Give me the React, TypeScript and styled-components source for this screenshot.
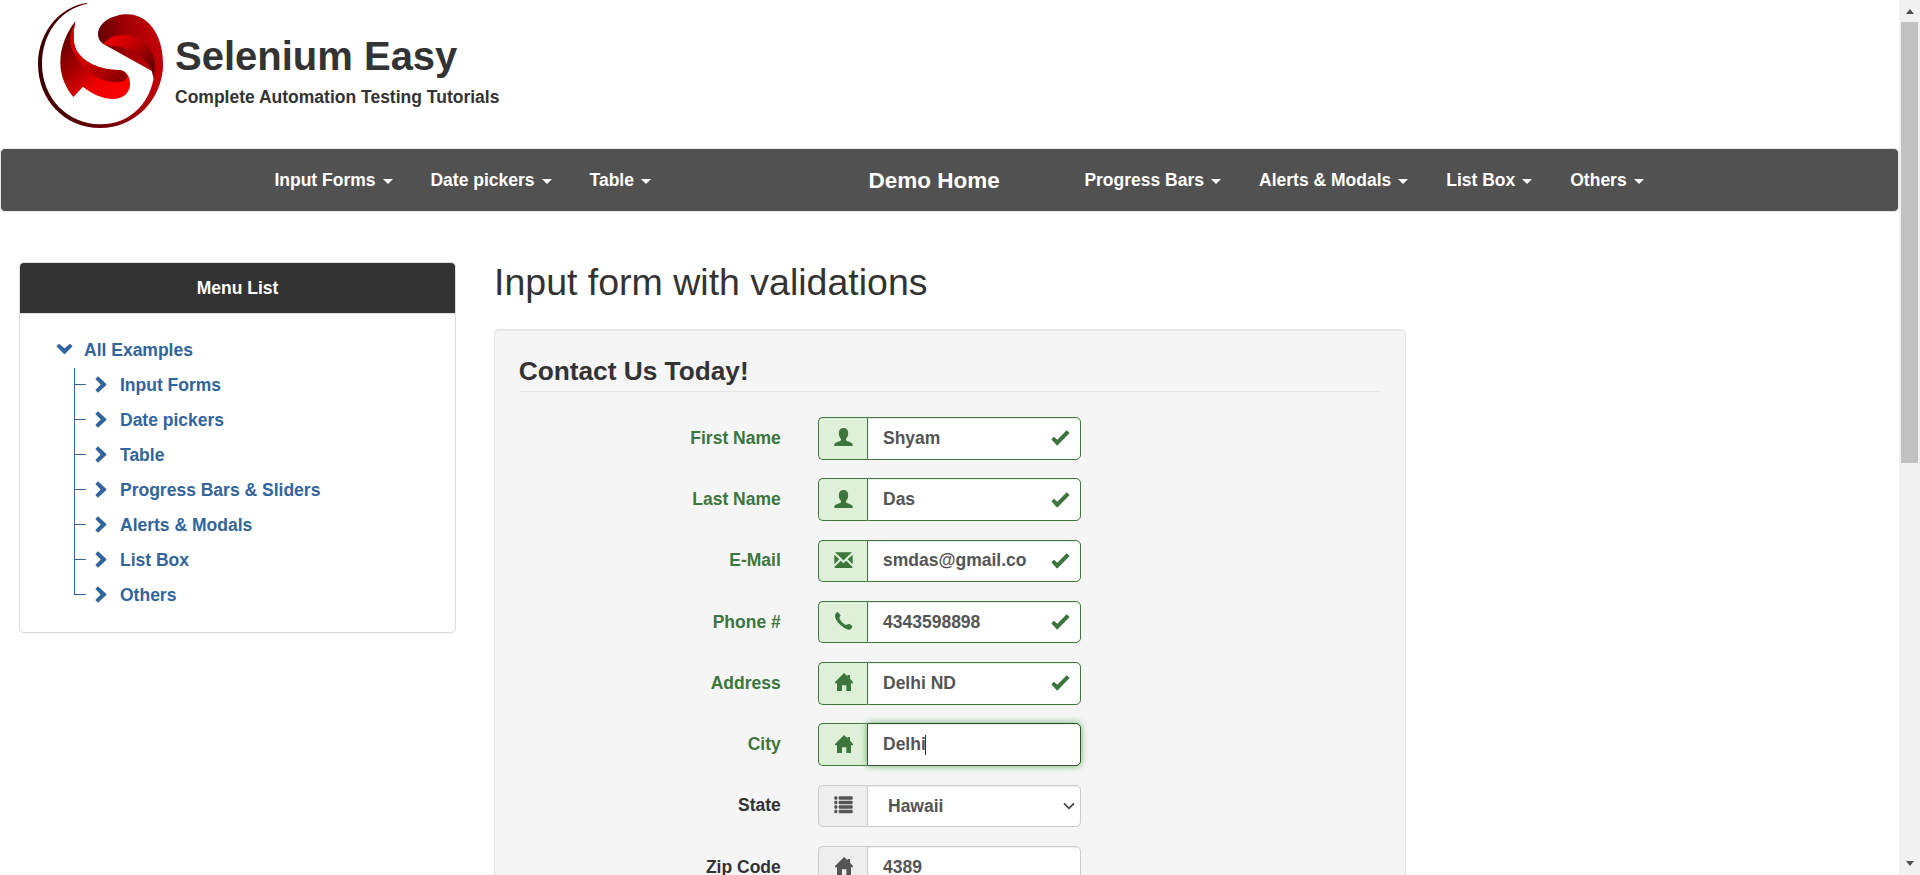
import React from "react";
import styled, { createGlobalStyle, css } from "styled-components";

const GlobalStyle = createGlobalStyle`
  *, *::before, *::after { box-sizing: border-box; }
  html, body { margin: 0; padding: 0; height: 100%; overflow: hidden; }
  body {
    background: #fff;
    color: #333;
    font-family: "Liberation Sans", Arial, sans-serif;
    font-size: 17.5px;
    font-weight: 700;
    line-height: 25px;
  }
  a { color: inherit; text-decoration: none; }
  ul { list-style: none; margin: 0; padding: 0; }
`;

const Window = styled.div`
  display: flex;
  width: 1920px;
  height: 875px;
  overflow: hidden;
`;

const Page = styled.div`
  flex: 1;
  min-width: 0;
  overflow: hidden;
`;

/* ---------- header ---------- */

const Header = styled.header`
  display: flex;
  height: 148px;
  padding: 3px 0 0 38px;
`;

const Brand = styled.div`
  display: flex;
  flex-direction: column;
  padding: 31px 0 0 12px;
`;

const SiteName = styled.h1`
  margin: 0;
  font-size: 40px;
  line-height: 45px;
`;

const Tagline = styled.div`
  margin-top: 6px;
`;

const Logo = () => (
  <svg width="125" height="125" viewBox="12 9 375 375" aria-label="Selenium Easy">
    <defs>
      <linearGradient id="ring" x1="0" y1="0.3" x2="1" y2="0.3">
        <stop offset="0" stopColor="#3c0002" />
        <stop offset="0.5" stopColor="#6a0006" />
        <stop offset="0.85" stopColor="#a90006" />
        <stop offset="1" stopColor="#c80008" />
      </linearGradient>
      <linearGradient id="cap" x1="0" y1="0.4" x2="1" y2="0.3">
        <stop offset="0" stopColor="#610003" />
        <stop offset="0.45" stopColor="#a00004" />
        <stop offset="1" stopColor="#c90008" />
      </linearGradient>
      <linearGradient id="fold" x1="0" y1="0" x2="1" y2="0.8">
        <stop offset="0" stopColor="#f40000" />
        <stop offset="0.4" stopColor="#c90000" />
        <stop offset="1" stopColor="#5d0000" />
      </linearGradient>
      <linearGradient id="tail" x1="0" y1="0" x2="0.9" y2="1">
        <stop offset="0.1" stopColor="#5c0000" />
        <stop offset="0.45" stopColor="#a80000" />
        <stop offset="0.7" stopColor="#ee0000" />
        <stop offset="1" stopColor="#ff0000" />
      </linearGradient>
      <linearGradient id="band" x1="0" y1="0" x2="1" y2="0.9">
        <stop offset="0" stopColor="#e00000" />
        <stop offset="0.5" stopColor="#cc0000" />
        <stop offset="1" stopColor="#860000" />
      </linearGradient>
    </defs>
    <path
      fill="url(#ring)"
      d="M160 9C80 17 12 96 12 192C12 300 92 384 198 384C304 384 387 298 387 188L360 225C352 300 296 373 198 373C100 373 24 292 24 192C24 102 78 27 160 11Z"
    />
    <path
      fill="url(#cap)"
      d="M208 132C196 124 192 112 192 101C194 66 238 43 280 43C344 43 387 108 387 188C387 224 378 262 355 291C363 244 360 218 359 216Z"
    />
    <path
      fill="url(#fold)"
      d="M208 132C222 112 250 102 280 106C330 113 366 156 363 196C362 210 361 220 358 236C356 186 300 142 236 138Q218 137 208 132Z"
    />
    <path
      fill="url(#tail)"
      d="M124 64C98 98 79 140 79 188C79 226 94 262 118 291L147 260C174 282 208 297 238 297C268 297 288 278 288 252C288 228 276 210 250 210C196 208 148 186 128 152C116 130 117 100 124 64Z"
    />
    <path
      fill="url(#band)"
      d="M124 64C108 96 106 122 112 142C128 188 174 240 240 247C262 248 276 242 279 232C280 218 270 210 250 210C196 208 148 186 128 152C116 130 117 100 124 64Z"
    />
  </svg>
);

/* ---------- navigation bar ---------- */

const NavBar = styled.nav`
  display: flex;
  height: 64px;
  padding: 0 18.75px 0 254.5px;
  border: 1px solid #e7e7e7;
  border-radius: 5px;
  background: #515151;
  color: #fff;
`;

const NavGroup = styled.div<{ $width?: number }>`
  display: flex;
  align-items: center;
  width: ${(p) => (p.$width ? `${p.$width}px` : "auto")};
`;

const NavLink = styled.a`
  display: flex;
  align-items: center;
  padding: 0 18.9px;
`;

const Caret = styled.span`
  margin: 3px 0 0 7.2px;
  border-top: 5px solid currentColor;
  border-left: 5px solid transparent;
  border-right: 5px solid transparent;
`;

const HomeLink = styled.a`
  width: 197px;
  font-size: 22.5px;
  line-height: 25px;
`;

/* ---------- body ---------- */

const Content = styled.main`
  display: flex;
  align-items: flex-start;
  padding: 50px 0 0 19px;
`;

const SidePanel = styled.aside`
  width: 437px;
  height: 371px;
  border: 1px solid #ddd;
  border-radius: 5px;
  box-shadow: 0 1px 1px rgba(0, 0, 0, 0.05);
  overflow: hidden;
`;

const PanelHeading = styled.div`
  height: 51px;
  padding-top: 13px;
  border-bottom: 1px solid #ddd;
  background: #333;
  color: #fff;
  text-align: center;
`;

const Tree = styled.div`
  padding: 24px 0 0 36px;
  color: #31659c;
`;

const TreeRoot = styled.a`
  display: flex;
  height: 25px;
  align-items: center;
  gap: 11px;

  svg { margin-top: -4px; }
`;

const TreeBranch = styled.ul`
  position: relative;
  margin-left: 18px;
  padding-top: 5px;

  &::before {
    content: "";
    position: absolute;
    top: 5px;
    left: 0;
    width: 1px;
    height: 227px;
    background: #31659c;
  }
`;

const TreeLeaf = styled.li`
  display: flex;
  height: 35px;
  align-items: center;

  &::before {
    content: "";
    width: 12px;
    height: 1px;
    margin: -3px 9px 0 0;
    background: #31659c;
  }

  svg { margin: -3px 13px 0 0; }
`;

const FormColumn = styled.section`
  width: 912px;
  margin-left: 38px;
`;

const PageTitle = styled.h2`
  margin: 0;
  height: 67px;
  font-size: 37.5px;
  font-weight: 400;
  line-height: 41px;
`;

const Well = styled.form`
  padding: 23.5px 23.75px;
  height: 700px;
  border: 1px solid #e3e3e3;
  border-radius: 5px;
  background: #f5f5f5;
  box-shadow: inset 0 1px 1px rgba(0, 0, 0, 0.05);
`;

const Legend = styled.h3`
  margin: 0 0 25.1px;
  height: 38.5px;
  border-bottom: 1px solid #e5e5e5;
  font-size: 26.25px;
  line-height: 35px;
`;

type Tone = "valid" | "plain";

const Field = styled.div<{ $tone: Tone }>`
  display: flex;
  height: 42.5px;
  margin-bottom: 18.75px;
  color: ${(p) => (p.$tone === "valid" ? "#3c763d" : "#333")};
`;

const Label = styled.label`
  width: 262px;
  margin-right: 37.25px;
  padding-top: 8.75px;
  text-align: right;
`;

const Addon = styled.span<{ $tone: Tone }>`
  display: flex;
  align-items: center;
  justify-content: center;
  width: 49px;
  padding-bottom: 2px;
  border: 1px solid;
  border-right: 0;
  border-radius: 5px 0 0 5px;
  ${(p) =>
    p.$tone === "valid"
      ? css`
          color: #3c763d;
          background: #dff0d8;
          border-color: #3c763d;
        `
      : css`
          color: #555;
          background: #eee;
          border-color: #ccc;
        `}
`;

const Control = styled.div<{ $tone: Tone; $focus?: boolean; $select?: boolean }>`
  display: flex;
  align-items: center;
  justify-content: space-between;
  width: 214px;
  padding: ${(p) => (p.$select ? "1px 5px 0 20px" : "0 10px 0 15px")};
  border: 1px solid ${(p) => (p.$tone === "valid" ? "#3c763d" : "#ccc")};
  border-radius: 0 5px 5px 0;
  background: #fff;
  color: #555;
  box-shadow: inset 0 1px 1px rgba(0, 0, 0, 0.075);
  ${(p) =>
    p.$focus &&
    css`
      border-color: #2b542c;
      box-shadow: inset 0 1px 1px rgba(0, 0, 0, 0.075), 0 0 7.5px #67b168;
    `}
`;

const Value = styled.span`
  display: flex;
  align-items: center;
`;

const TextCursor = styled.i`
  width: 1px;
  height: 20px;
  margin-left: -1px;
  background: #333;
`;

/* ---------- icons ---------- */

const Glyph = ({ children }: { children: React.ReactNode }) => (
  <svg width="19" height="18" viewBox="0 0 57 54" fill="currentColor">
    {children}
  </svg>
);

const UserIcon = () => (
  <Glyph>
    <path d="M28.500 0C19 0 14.500 6 14.500 16C14.500 24 17 29 21 33V37C18 41 1 43 1 50V54H56V50C56 43 39 41 36 37V33C40 29 42.500 24 42.500 16C42.500 6 38 0 28.500 0Z" />
  </Glyph>
);

const MailIcon = () => (
  <Glyph>
    <path d="M3 4H54L28.500 28ZM1 11L16 25L1 40ZM56 11L41 25L56 40ZM2 51V47L20 29L28.500 37L37 29L55 47V51Z" />
  </Glyph>
);

const PhoneIcon = () => (
  <Glyph>
    <path d="M11 0L20 10L16 18C18 26 28 36 36 39L45 35L54 41C56 44 53 50 48 53C43 54 33 51 24 43C12 33 3 21 3 12C3 6 7 1 11 0Z" />
  </Glyph>
);

const HomeIcon = () => (
  <Glyph>
    <path d="M30 0L41 10V6H48V17L57 27V31H51V54H37V37H24V54H9V31H3V27Z" />
  </Glyph>
);

const ListIcon = () => (
  <Glyph>
    {[1, 14.5, 28, 41.5].map((y) => (
      <g key={y}>
        <rect x="1" y={y} width="9" height="10.500" rx="3" />
        <rect x="14" y={y} width="42" height="10.500" rx="3" />
      </g>
    ))}
  </Glyph>
);

const OkIcon = () => (
  <svg width="19" height="16" viewBox="0 0 57 48" fill="currentColor">
    <path d="M1 28L9 20L19 29L47 1L56 9L20 46H17Z" />
  </svg>
);

const ChevronDown = () => (
  <svg width="17" height="12" viewBox="0 0 51 36" fill="currentColor">
    <path d="M9 2L25.500 16L42 2L50 10L27 33H24L1 10Z" />
  </svg>
);

const ChevronRight = () => (
  <svg width="12" height="17" viewBox="0 0 36 51" fill="currentColor">
    <path d="M1 9L9 1L34 24V27L9 50L1 42L17 25.500Z" />
  </svg>
);

const SelectArrow = () => (
  <svg width="12" height="8" viewBox="0 0 12 8" fill="none" stroke="#444" strokeWidth="1.800">
    <path d="M1 1.300L6 6.300L11 1.300" />
  </svg>
);

/* ---------- scrollbar ---------- */

const ScrollTrack = styled.div`
  display: flex;
  flex-direction: column;
  align-items: center;
  width: 21px;
  height: 875px;
  padding: 9px 0;
  background: #f1f1f1;
`;

const ScrollThumb = styled.div`
  width: 17px;
  height: 441px;
  margin: 8px 0 auto;
  background: #c1c1c1;
`;

const ScrollArrow = styled.span<{ $up?: boolean }>`
  border: 4.5px solid transparent;
  ${(p) =>
    p.$up
      ? css`
          border-top: 0;
          border-bottom: 5px solid #505050;
        `
      : css`
          border-bottom: 0;
          border-top: 5px solid #505050;
        `}
`;

/* ---------- data ---------- */

const leftLinks = ["Input Forms", "Date pickers", "Table"];
const rightLinks = ["Progress Bars", "Alerts & Modals", "List Box", "Others"];
const treeItems = [
  "Input Forms",
  "Date pickers",
  "Table",
  "Progress Bars & Sliders",
  "Alerts & Modals",
  "List Box",
  "Others",
];

interface FieldData {
  label: string;
  value: string;
  icon: React.ReactNode;
  tone: Tone;
  focus?: boolean;
  select?: boolean;
}

const fields: FieldData[] = [
  { label: "First Name", value: "Shyam", icon: <UserIcon />, tone: "valid" },
  { label: "Last Name", value: "Das", icon: <UserIcon />, tone: "valid" },
  { label: "E-Mail", value: "smdas@gmail.co", icon: <MailIcon />, tone: "valid" },
  { label: "Phone #", value: "4343598898", icon: <PhoneIcon />, tone: "valid" },
  { label: "Address", value: "Delhi ND", icon: <HomeIcon />, tone: "valid" },
  { label: "City", value: "Delhi", icon: <HomeIcon />, tone: "valid", focus: true },
  { label: "State", value: "Hawaii", icon: <ListIcon />, tone: "plain", select: true },
  { label: "Zip Code", value: "4389", icon: <HomeIcon />, tone: "plain" },
];

const Check = styled.span`
  display: flex;
  color: #3c763d;
`;

const MenuLink = ({ text }: { text: string }) => (
  <NavLink href="#">
    {text}
    <Caret />
  </NavLink>
);

export default function App() {
  return (
    <>
      <GlobalStyle />
      <Window>
        <Page>
          <Header>
            <Logo />
            <Brand>
              <SiteName>Selenium Easy</SiteName>
              <Tagline>Complete Automation Testing Tutorials</Tagline>
            </Brand>
          </Header>
          <NavBar>
            <NavGroup $width={613}>
              {leftLinks.map((t) => (
                <MenuLink key={t} text={t} />
              ))}
            </NavGroup>
            <NavGroup>
              <HomeLink href="#">Demo Home</HomeLink>
              {rightLinks.map((t) => (
                <MenuLink key={t} text={t} />
              ))}
            </NavGroup>
          </NavBar>
          <Content>
            <SidePanel>
              <PanelHeading>Menu List</PanelHeading>
              <Tree>
                <TreeRoot href="#">
                  <ChevronDown />
                  All Examples
                </TreeRoot>
                <TreeBranch>
                  {treeItems.map((t) => (
                    <TreeLeaf key={t}>
                      <ChevronRight />
                      {t}
                    </TreeLeaf>
                  ))}
                </TreeBranch>
              </Tree>
            </SidePanel>
            <FormColumn>
              <PageTitle>Input form with validations</PageTitle>
              <Well>
                <Legend>Contact Us Today!</Legend>
                {fields.map((f) => (
                  <Field key={f.label} $tone={f.tone}>
                    <Label>{f.label}</Label>
                    <Addon $tone={f.tone}>{f.icon}</Addon>
                    <Control $tone={f.tone} $focus={f.focus} $select={f.select}>
                      <Value>
                        {f.value}
                        {f.focus && <TextCursor />}
                      </Value>
                      {f.tone === "valid" && !f.focus && (
                        <Check>
                          <OkIcon />
                        </Check>
                      )}
                      {f.select && <SelectArrow />}
                    </Control>
                  </Field>
                ))}
              </Well>
            </FormColumn>
          </Content>
        </Page>
        <ScrollTrack>
          <ScrollArrow $up />
          <ScrollThumb />
          <ScrollArrow />
        </ScrollTrack>
      </Window>
    </>
  );
}
